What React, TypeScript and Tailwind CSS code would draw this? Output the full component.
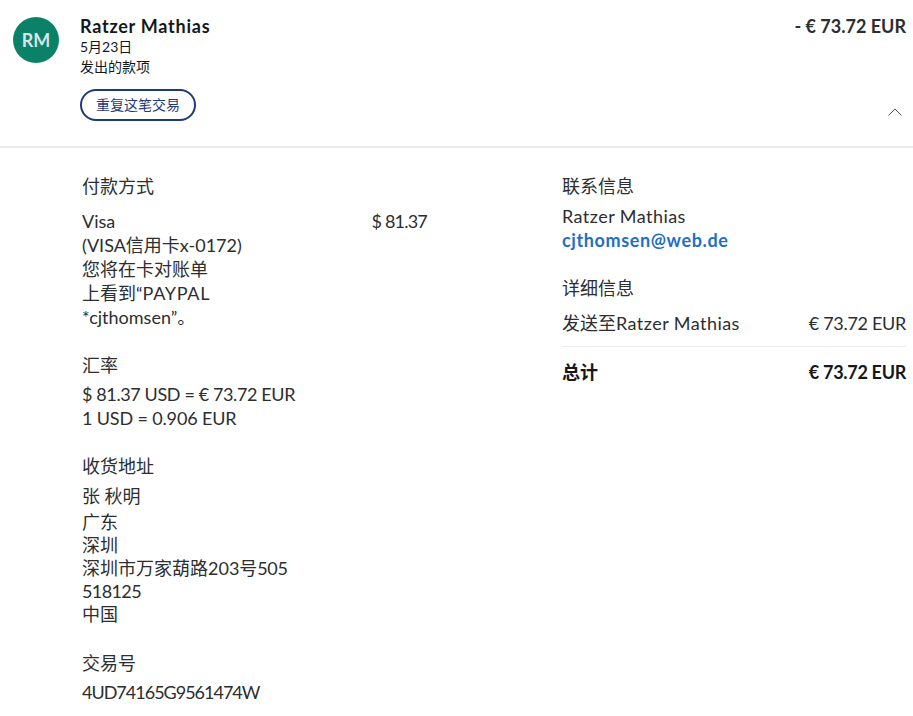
function Heading({ children, className = "" }: { children: React.ReactNode; className?: string }) {
  return <h3 className={`text-[18px] leading-[24px] font-normal text-[#2c2e2f] ${className}`}>{children}</h3>;
}

export default function App() {
  return (
    <div className="w-[913px] h-[716px] overflow-hidden bg-white text-[#2c2e2f] [font-family:Lato,'Noto_Sans_CJK_SC',sans-serif]">
      <header className="h-[148px] border-b-2 border-[#ececec] flex pl-[13px] pr-[7px] pt-[14px]">
        <div className="mt-[3px] w-[46px] h-[46px] rounded-full bg-[#0b8268] flex items-center justify-center text-[#d5e6e8] text-[18px] font-bold">RM</div>
        <div className="ml-[21px] flex-1 flex flex-col items-start">
          <div className="text-[18px] leading-[24px] font-bold text-[#15181a] tracking-[0.75px]">Ratzer Mathias</div>
          <div className="-mt-[1px] text-[14px] leading-[20px] text-[#15181a]">5月23日</div>
          <div className="text-[14px] leading-[20px] text-[#15181a]">发出的款项</div>
          <button className="mt-[12px] w-[116px] h-[32px] pb-[2px] rounded-full border-2 border-[#1f3a7a] text-[#1f3a7a] text-[14px] bg-white">重复这笔交易</button>
        </div>
        <div className="flex flex-col items-end justify-between h-[102px]">
          <div className="text-[18px] leading-[24px] font-bold text-[#2c2e2f]">- € 73.72 EUR</div>
          <svg width="14" height="8" viewBox="0 0 14 8" fill="none" className="mr-[4px]" stroke="#555" strokeWidth="1"><path d="M0.5 7.5 L7 1 L13.5 7.5" /></svg>
        </div>
      </header>

      <main className="flex pl-[82px] pr-[7px] pt-[26px]">
        <div className="w-[345px] shrink-0">
          <Heading>付款方式</Heading>
          <div className="mt-[11px] flex justify-between text-[18px] leading-[24px]">
            <div className="w-[170px]">
              <div>Visa</div>
              <div className="whitespace-nowrap">(VISA信用卡x-0172)</div>
              <div>您将在卡对账单</div>
              <div className="whitespace-nowrap">上看到“<span className="tracking-[0.7px]">PAYPAL</span></div>
              <div>*cjthomsen”。</div>
            </div>
            <div className="tracking-[-0.8px]">$ 81.37</div>
          </div>

          <Heading className="mt-[24px]">汇率</Heading>
          <div className="mt-[5px] text-[18px] leading-[24px]">
            <div className="tracking-[-0.38px]">$ 81.37 USD = € 73.72 EUR</div>
            <div className="tracking-[-0.15px]">1 USD = 0.906 EUR</div>
          </div>

          <Heading className="mt-[24px]">收货地址</Heading>
          <div className="mt-[6px] text-[18px] leading-[24px]">张 秋明</div>
          <div className="mt-[3px] text-[18px] leading-[23px]">
            <div>广东</div>
            <div>深圳</div>
            <div>深圳市万家葫路203号<span className="tracking-[-0.4px]">505</span></div>
            <div className="tracking-[-0.6px]">518125</div>
            <div>中国</div>
          </div>

          <Heading className="mt-[25px]">交易号</Heading>
          <div className="mt-[5px] text-[18px] leading-[24px] tracking-[-1px]">4UD74165G9561474W</div>
        </div>

        <div className="ml-[135px] flex-1">
          <Heading>联系信息</Heading>
          <div className="mt-[6px] text-[18px] leading-[24px] tracking-[0.45px]">Ratzer Mathias</div>
          <div className="text-[18px] leading-[24px] font-bold text-[#1f6fc4] tracking-[0.62px]">cjthomsen@web.de</div>

          <Heading className="mt-[24px]">详细信息</Heading>
          <div className="mt-[11px] flex justify-between text-[18px] leading-[24px] pb-[11px] border-b border-[#ececec]">
            <span>发送至<span className="tracking-[0.45px]">Ratzer Mathias</span></span>
            <span className="tracking-[-0.3px]">€ 73.72 EUR</span>
          </div>
          <div className="mt-[13px] flex justify-between text-[18px] leading-[24px] font-bold text-[#15181a]">
            <span>总计</span>
            <span className="tracking-[-0.3px]">€ 73.72 EUR</span>
          </div>
        </div>
      </main>
    </div>
  );
}
